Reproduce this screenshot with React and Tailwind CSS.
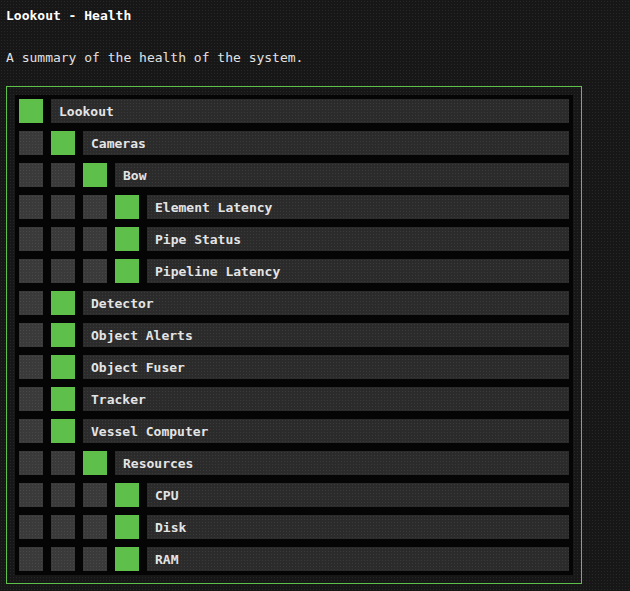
import React from "react";

const rows = [
  [0, "Lookout"],
  [1, "Cameras"],
  [2, "Bow"],
  [3, "Element Latency"],
  [3, "Pipe Status"],
  [3, "Pipeline Latency"],
  [1, "Detector"],
  [1, "Object Alerts"],
  [1, "Object Fuser"],
  [1, "Tracker"],
  [1, "Vessel Computer"],
  [2, "Resources"],
  [3, "CPU"],
  [3, "Disk"],
  [3, "RAM"],
];

const dots =
  "bg-[radial-gradient(circle_at_center,rgba(255,255,255,0.07)_0.8px,transparent_1px)] bg-[length:3px_3px]";

export default function App() {
  return (
    <div
      className={`min-h-[591px] w-full bg-[#171717] ${dots} px-[6px] pt-[8px] pb-[7px]`}
      style={{ fontFamily: '"DejaVu Sans Mono", "Liberation Mono", monospace' }}
    >
      <div className="text-[13px] leading-[16px] font-bold text-white">Lookout - Health</div>
      <div className="mt-[26px] text-[13px] leading-[16px] text-[#e2e2e2]">
        A summary of the health of the system.
      </div>
      <div className="mt-[20px] w-[576px] border border-[#5ec04a] p-[8px]">
        <div className="flex flex-col gap-[8px] bg-[#050505] p-[4px]">
          {rows.map(([lvl, name], i) => (
            <div key={i} className="flex h-[24px] gap-[8px]">
              {Array.from({ length: lvl }).map((_, j) => (
                <div key={j} className={`h-[24px] w-[24px] shrink-0 bg-[#3a3a3a] ${dots}`} />
              ))}
              <div className="h-[24px] w-[24px] shrink-0 bg-[#5ec04a]" />
              <div
                className={`flex h-[24px] flex-1 items-center bg-[#2b2b2b] ${dots} pl-[8px] pt-[2px] text-[13px] font-bold text-[#e4e4e4]`}
              >
                {name}
              </div>
            </div>
          ))}
        </div>
      </div>
    </div>
  );
}
